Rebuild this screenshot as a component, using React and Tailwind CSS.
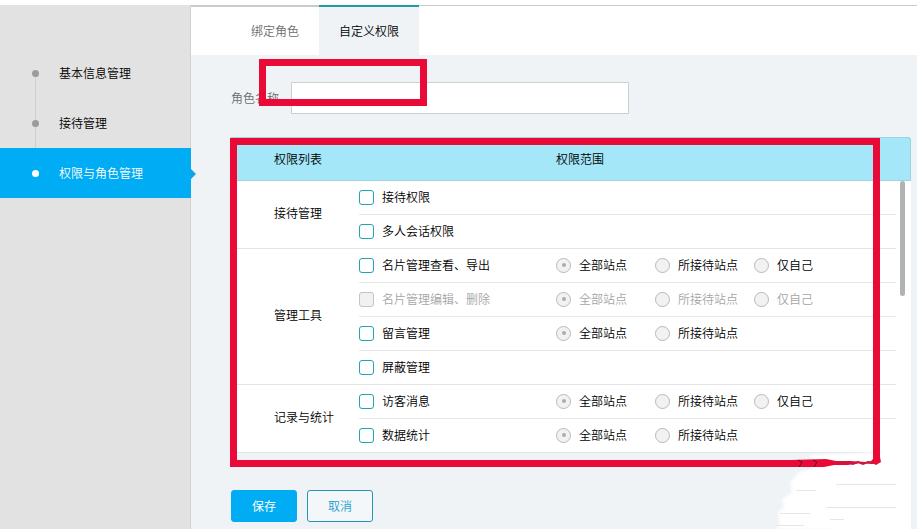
import { useState } from "react";

const MENU = ["基本信息管理", "接待管理", "权限与角色管理"];
const TABS = ["绑定角色", "自定义权限"];
const SCOPES = ["全部站点", "所接待站点", "仅自己"];

const GROUPS = [
    {
        name: "接待管理",
        items: [
            { name: "接待权限", scopes: 0 },
            { name: "多人会话权限", scopes: 0 }
        ]
    },
    {
        name: "管理工具",
        items: [
            { name: "名片管理查看、导出", scopes: 3 },
            { name: "名片管理编辑、删除", scopes: 3, disabled: true },
            { name: "留言管理", scopes: 2 },
            { name: "屏蔽管理", scopes: 0 }
        ]
    },
    {
        name: "记录与统计",
        items: [
            { name: "访客消息", scopes: 3 },
            { name: "数据统计", scopes: 2 }
        ]
    }
];

// ================= SIDEBAR =================
function Sidebar() {
    return (
        <nav className="w-[191px] shrink-0 bg-[#e2e2e2] border-r border-[#d2d2d2] pt-[43px]">
            {MENU.map((name, i) => {
                const active = i === 2;

                return (
                    <a
                        key={name}
                        href="#"
                        className={`relative flex items-center h-[50px] pl-8 gap-5 ${active ? "-mr-px bg-[#00acf3] text-white" : "text-black"}`}
                    >
                        {!active && (
                            <span className={`absolute left-[35px] w-px bg-[#d0d0d0] ${i === 0 ? "top-[25px] h-[25px]" : "top-0 h-full"}`} />
                        )}
                        <span className={`relative size-[7px] rounded-full ${active ? "bg-white" : "bg-[#9b9b9b]"}`} />
                        {name}
                        {active && (
                            <svg className="absolute left-full top-[21px]" width="5" height="10" viewBox="0 0 5 10">
                                <path d="M0 0L5 5L0 10Z" fill="#0fa3e0" />
                            </svg>
                        )}
                    </a>
                );
            })}
        </nav>
    );
}

// ================= ROW =================
function PermissionRow({ group, item, first, last }) {
    const [checked, setChecked] = useState(false);
    const [scope, setScope] = useState(0);
    const line = last ? "border-[#e2e4e5]" : "border-[#e8e8e8]";

    return (
        <tr className="h-[34px]">
            {first && (
                <td rowSpan={group.items.length} className="border-b border-[#e2e4e5] pl-[43px] pb-1">
                    {group.name}
                </td>
            )}
            <td className={`border-b pb-px ${line}`}>
                <label className={`flex items-center gap-2 ${item.disabled ? "text-[#a6a6a6]" : ""}`}>
                    <input
                        type="checkbox"
                        checked={checked}
                        disabled={item.disabled}
                        onChange={e => setChecked(e.target.checked)}
                        className="appearance-none size-[15px] rounded-[3px] border border-[#21a5b0] bg-white checked:bg-[#00acf3] disabled:border-[#c4c4c4] disabled:bg-[#f1f1f1]"
                    />
                    {item.name}
                </label>
            </td>
            <td className={`border-b pb-px ${line}`}>
                <div className="grid grid-cols-[99px_99px_99px]">
                    {SCOPES.slice(0, item.scopes).map((s, i) => (
                        <label key={s} className={`flex items-center gap-2 ${item.disabled ? "text-[#a6a6a6]" : ""}`}>
                            <input
                                type="radio"
                                name={item.name}
                                checked={scope === i}
                                disabled={!checked}
                                onChange={() => setScope(i)}
                                className="appearance-none grid place-content-center size-[15px] rounded-full border border-[#b9b9b9] bg-[#f2f2f2] before:size-1 before:rounded-full checked:before:bg-[#adadad]"
                            />
                            {s}
                        </label>
                    ))}
                </div>
            </td>
            <td />
        </tr>
    );
}

// ================= MARKS =================
function Smudge() {
    return (
        <svg className="absolute right-0 top-[308px] pointer-events-none" width="141" height="84" viewBox="0 0 141 84">
            <defs>
                <filter id="soft" x="-10%" y="-10%" width="120%" height="120%">
                    <feGaussianBlur stdDeviation="1.5" />
                </filter>
            </defs>
            <path
                d="M40 10L140 6V84H6L10 78L8 68L14 62L12 54L22 48L20 38L28 28L46 22Z"
                fill="#fff"
                filter="url(#soft)"
            />
            <path d="M112 6H141V84H60V24H112Z" fill="#fff" />
            <g stroke="#e4e7e8" fill="none">
                <path d="M66 39.5H126M56 62.5H126M26 45.5H46M10 68.5H40M6 80.5H34M60 74.5H74" />
            </g>
            <path
                d="M20 15L56 14L66 16L80 16L96 17L110 16V0H104V12L106 17L102 19L90 18L78 20L64 20L54 22L20 22Z"
                fill="#ea0a38"
            />
            <path d="M103 0H110V12L111 17L106 20L100 17L103 14Z" fill="#ea0a38" />
            <path d="M66 18L70 17L74 19L78 17L83 19L88 17L93 19L98 17L104 18" stroke="#c81a40" strokeWidth="2" fill="none" />
            <path d="M28 15L32 17L29 22M43 15L47 17L44 22" stroke="#6d0a20" fill="none" />
        </svg>
    );
}

export default function RolePermissions() {
    const [tab, setTab] = useState(1);
    const [roleName, setRoleName] = useState("");

    return (
        <div className="flex min-h-screen border-t-5 border-white bg-[#eff3f6] text-xs font-[350] text-black font-['Noto_Sans_CJK_SC',sans-serif]">
            <Sidebar />

            {/* MAIN */}
            <main className="flex-1 min-w-0">

                {/* TABS */}
                <div className="flex h-[50px] bg-white pl-10">
                    {TABS.map((t, i) => (
                        <button
                            key={t}
                            onClick={() => setTab(i)}
                            className={`px-5 border-t-2 ${tab === i ? "border-[#1c9cad] bg-[#eff3f6]" : "border-[#c9cccd] -ml-10 pl-[60px] text-[#6c6c6c]"}`}
                        >
                            {t}
                        </button>
                    ))}
                    <div className="flex-1 border-t border-[#c9cccd]" />
                </div>

                <div className="pt-[27px] pl-10 pr-[6px] pb-[7px]">

                    {/* ROLE NAME */}
                    <div className="relative flex items-center gap-3">
                        <label htmlFor="roleName" className="text-[#6c6c6c]">角色名称</label>
                        <input
                            id="roleName"
                            value={roleName}
                            onChange={e => setRoleName(e.target.value)}
                            className="w-[338px] h-8 border border-[#cbd0d3] bg-white px-2 outline-none"
                        />
                        <div className="absolute left-7 -top-[23px] w-[168px] h-[47px] border-7 border-[#ea0a38] pointer-events-none" />
                    </div>

                    {/* PERMISSION TABLE */}
                    <div className="relative mt-[23px]">
                        <table className="w-full table-fixed border-separate border-spacing-0 bg-white text-left">
                            <colgroup>
                                <col className="w-32" />
                                <col className="w-[197px]" />
                                <col />
                                <col className="w-[15px]" />
                            </colgroup>
                            <thead>
                                <tr className="h-11 bg-[#a3e7f8]">
                                    <th colSpan={2} className="border-b border-t border-[#9fd3de] pl-[43px] font-[350]">权限列表</th>
                                    <th colSpan={2} className="border-b border-t border-r border-[#9fd3de] rounded-tr-[3px] font-[350]">权限范围</th>
                                </tr>
                            </thead>
                            <tbody>
                                {GROUPS.map(g => g.items.map((item, i) => (
                                    <PermissionRow
                                        key={item.name}
                                        group={g}
                                        item={item}
                                        first={i === 0}
                                        last={i === g.items.length - 1}
                                    />
                                )))}
                            </tbody>
                        </table>

                        <div className="absolute right-[6px] top-11 w-[5px] h-[115px] rounded-full bg-[#b1b3b3]" />
                        <div className="absolute -left-px top-px right-[31px] -bottom-[14px] border-7 border-[#ea0a38] pointer-events-none" />
                        <Smudge />
                    </div>

                    {/* ACTIONS */}
                    <div className="flex gap-[10px] mt-[37px]">
                        <button className="w-[66px] h-8 rounded-[3px] border border-[#00acf3] bg-[#00acf3] font-normal text-white">保存</button>
                        <button className="w-[66px] h-8 rounded-[3px] border border-[#2593b5] bg-[#f3f7f9] text-[#1ba0cf]">取消</button>
                    </div>
                </div>
            </main>
        </div>
    );
}
